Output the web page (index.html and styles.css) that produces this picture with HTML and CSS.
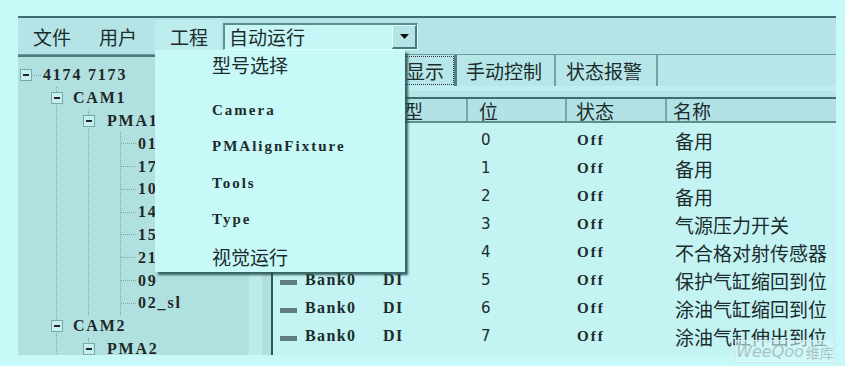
FILE: index.html
```html
<!DOCTYPE html>
<html lang="zh">
<head>
<meta charset="utf-8">
<link rel="stylesheet" href="styles.css">
</head>
<body>
<div class="window">
  <div class="menubar">
    <span class="mitem">文件</span>
    <span class="mitem">用户</span>
    <span class="mitem active">工程</span>
    <div class="combo">
      <span class="combo-text">自动运行</span>
      <span class="combo-btn"><svg width="9" height="5" viewBox="0 0 9 5"><path d="M0 0H9L4.5 5Z" fill="#111"/></svg></span>
    </div>
  </div>
  <div class="main">
    <div class="tree">
      <div class="row root"><span class="tgl"></span><span class="lbl">4174 7173</span></div>
      <div class="kids">
        <div class="row"><span class="tgl"></span><span class="lbl">CAM1</span></div>
        <div class="kids">
          <div class="row"><span class="tgl"></span><span class="lbl">PMA1</span></div>
          <div class="kids">
            <div class="row leaf"><span class="stub"></span><span class="lbl">01</span></div>
            <div class="row leaf"><span class="stub"></span><span class="lbl">17</span></div>
            <div class="row leaf"><span class="stub"></span><span class="lbl">10</span></div>
            <div class="row leaf"><span class="stub"></span><span class="lbl">14</span></div>
            <div class="row leaf"><span class="stub"></span><span class="lbl">15</span></div>
            <div class="row leaf"><span class="stub"></span><span class="lbl">21</span></div>
            <div class="row leaf"><span class="stub"></span><span class="lbl">09</span></div>
            <div class="row leaf"><span class="stub"></span><span class="lbl">02_sl</span></div>
          </div>
        </div>
        <div class="row"><span class="tgl"></span><span class="lbl">CAM2</span></div>
        <div class="kids">
          <div class="row"><span class="tgl"></span><span class="lbl">PMA2</span></div>
        </div>
      </div>
      <div class="splitter"></div>
    </div>
    <div class="pane">
      <div class="tabs">
        <span class="tab sel"><span class="focus">数据显示</span></span>
        <span class="tab">手动控制</span>
        <span class="tab">状态报警</span>
      </div>
      <div class="list">
        <div class="head">
          <span class="c1">地址</span>
          <span class="c2">类型</span>
          <span class="c3">位</span>
          <span class="c4">状态</span>
          <span class="c5">名称</span>
        </div>
        <div class="rows">
          <div class="lrow"><span class="c1"><i class="ico"></i>Bank0</span><span class="c2">DI</span><span class="c3">0</span><span class="c4">Off</span><span class="c5">备用</span></div>
          <div class="lrow"><span class="c1"><i class="ico"></i>Bank0</span><span class="c2">DI</span><span class="c3">1</span><span class="c4">Off</span><span class="c5">备用</span></div>
          <div class="lrow"><span class="c1"><i class="ico"></i>Bank0</span><span class="c2">DI</span><span class="c3">2</span><span class="c4">Off</span><span class="c5">备用</span></div>
          <div class="lrow"><span class="c1"><i class="ico"></i>Bank0</span><span class="c2">DI</span><span class="c3">3</span><span class="c4">Off</span><span class="c5">气源压力开关</span></div>
          <div class="lrow"><span class="c1"><i class="ico"></i>Bank0</span><span class="c2">DI</span><span class="c3">4</span><span class="c4">Off</span><span class="c5">不合格对射传感器</span></div>
          <div class="lrow"><span class="c1"><i class="ico"></i>Bank0</span><span class="c2">DI</span><span class="c3">5</span><span class="c4">Off</span><span class="c5">保护气缸缩回到位</span></div>
          <div class="lrow"><span class="c1"><i class="ico"></i>Bank0</span><span class="c2">DI</span><span class="c3">6</span><span class="c4">Off</span><span class="c5">涂油气缸缩回到位</span></div>
          <div class="lrow"><span class="c1"><i class="ico"></i>Bank0</span><span class="c2">DI</span><span class="c3">7</span><span class="c4">Off</span><span class="c5">涂油气缸伸出到位</span></div>
        </div>
      </div>
    </div>
  </div>
  <div class="popup">
    <div class="pitem first cjk">型号选择</div>
    <div class="pitem">Camera</div>
    <div class="pitem">PMAlignFixture</div>
    <div class="pitem">Tools</div>
    <div class="pitem">Type</div>
    <div class="pitem cjk">视觉运行</div>
  </div>
</div>
<div class="watermark"><span class="wq">WeeQoo</span><span class="wk">维库</span></div>
</body>
</html>
```

FILE: styles.css
```css
* { box-sizing: border-box; }
html, body { margin: 0; padding: 0; }
body {
  width: 845px;
  height: 366px;
  overflow: hidden;
  background: #c8f9f9;
  color: #1c2b2b;
  font-family: "Noto Sans CJK SC", "Noto Sans", sans-serif;
  position: relative;
}
.window {
  position: relative;
  margin: 16px 0 0 18px;
  width: 818px;
  height: 339px;
  background: #b4e4e6;
  border-top: 2px solid #3f6d6e;
  display: flex;
  flex-direction: column;
}
.menubar {
  height: 36px;
  display: flex;
  align-items: center;
  padding-left: 15px;
  font-size: 19px;
  line-height: 1;
}
.mitem { margin-right: 28px; }
.mitem:nth-child(2) { margin-right: 18px; }
.mitem.active {
  margin-right: 2px;
  padding: 0 13px 0 15px;
  height: 32px;
  display: flex;
  align-items: center;
  background: #bdecee;
}
.combo {
  width: 195px;
  height: 27px;
  display: flex;
  align-items: stretch;
  background: #c6f6f6;
  border-top: 2px solid #5e8e8f;
  border-left: 2px solid #5e8e8f;
  border-bottom: 1px solid #d8ffff;
  border-right: 1px solid #d8ffff;
}
.combo-text { flex: 1; padding-left: 4px; display: flex; align-items: center; }
.combo-btn {
  width: 25px;
  background: #b4e4e6;
  border-top: 1px solid #e0ffff;
  border-left: 1px solid #e0ffff;
  border-right: 2px solid #4c7a7b;
  border-bottom: 2px solid #4c7a7b;
  display: flex;
  align-items: center;
  justify-content: center;
}
.main {
  flex: 1;
  display: flex;
  border-top: 1px solid #6a9c9d;
  min-height: 0;
}
.tree {
  position: relative;
  width: 253px;
  background: #b1e0e1;
  border-top: 2px solid #4b7b7c;
  padding-top: 7px;
  overflow: hidden;
  font-family: "Liberation Serif", serif;
  font-size: 16px;
  font-weight: bold;
  letter-spacing: 1.8px;
}
.row {
  height: 22.8px;
  display: flex;
  align-items: center;
  padding-left: 2px;
  position: relative;
  z-index: 1;
}
.tgl {
  width: 12px;
  height: 12px;
  border: 1px solid #7fa6a7;
  background: #c4f0f1;
  position: relative;
  flex: none;
}
.tgl::after {
  content: "";
  position: absolute;
  left: 2px;
  top: 4px;
  width: 6px;
  height: 2px;
  background: #223;
}
.lbl { margin-left: 11px; color: #1f2828; }
.root .lbl { margin-left: 2px; }
.root .tgl { margin-right: 9px; }
.root .tgl::before {
  content: "";
  position: absolute;
  left: 11px;
  top: 5px;
  width: 9px;
  border-top: 1px dotted #7fa6a7;
}
.kids {
  margin-left: 38px;
  border-left: 1px dotted #7fa6a7;
}
.kids > .row { padding-left: 0; }
.kids > .row > .tgl { margin-left: -6px; }
.kids > .row > .lbl { margin-left: 10px; }
.kids .kids > .row > .lbl { margin-left: 12px; }
.leaf > .stub {
  width: 15px;
  border-top: 1px dotted #7fa6a7;
}
.kids .kids .kids > .leaf > .lbl { margin-left: 2px; }
.kids .kids { margin-left: 31px; }
.splitter {
  position: absolute;
  top: 0;
  bottom: 0;
  left: 231px;
  width: 13px;
  background: #bdeaeb;
}
.pane {
  flex: 1;
  display: flex;
  flex-direction: column;
  min-width: 0;
}
.tabs {
  height: 36px;
  display: flex;
  align-items: flex-end;
  padding-left: 87px;
  font-size: 19px;
  line-height: 1;
  background: #b6e6e8;
  border-bottom: 5px solid #bfeeef;
}
.tab {
  height: 31px;
  display: flex;
  align-items: center;
  border-right: 2px solid #7a9fa0;
  padding: 0 12px 0 9px;
}
.tab.sel { border-right: 3px solid #55807f; padding: 0 0 0 6px; }
.focus {
  border: 1px dotted #334;
  padding: 4px 9px 4px 3px;
}
.tab:nth-child(3) { padding: 0 14px 0 10px; }
.list {
  flex: 1;
  border-left: 2px solid #2f5a5b;
  background: #c3f3f3;
  margin-top: 6px;
  display: flex;
  flex-direction: column;
  min-height: 0;
  overflow: hidden;
}
.head {
  height: 26px;
  flex: none;
  display: grid;
  grid-template-columns: 102px 93px 99px 100px 1fr;
  background: #b2e2e4;
  border-top: 2px solid #3f6d6e;
  border-bottom: 2px solid #5f8c8d;
  font-size: 19px;
  line-height: 1;
}
.head > span {
  display: flex;
  align-items: center;
  border-right: 2px solid #7ea3a4;
}
.head > span:last-child { border-right: none; }
.head .c1 { padding-left: 14px; }
.head .c2 { padding-left: 10px; }
.head .c3 { padding-left: 11px; }
.head .c4 { padding-left: 9px; }
.head .c5 { padding-left: 6px; }
.rows { padding-top: 3px; }
.lrow {
  height: 28px;
  display: grid;
  grid-template-columns: 102px 93px 99px 100px 1fr;
  align-items: center;
}
.lrow .c1, .lrow .c2 {
  font-family: "Liberation Serif", serif;
  font-weight: bold;
  font-size: 16px;
  letter-spacing: 1.4px;
}
.lrow .c1 { display: flex; align-items: center; padding-left: 7px; }
.ico {
  width: 17px;
  height: 5px;
  background: #5d7d7e;
  margin-right: 8px;
  margin-top: 5px;
  flex: none;
}
.lrow .c2 { padding-left: 8px; }
.lrow .c3 {
  padding-left: 13px;
  font-family: "DejaVu Sans", sans-serif;
  font-size: 15px;
}
.lrow .c4 {
  padding-left: 10px;
  font-family: "Liberation Serif", serif;
  font-weight: bold;
  font-size: 15px;
  letter-spacing: 2px;
}
.lrow .c5 {
  padding-left: 8px;
  font-size: 19px;
  line-height: 1;
  white-space: nowrap;
}
.popup {
  position: absolute;
  left: 137px;
  top: 32px;
  width: 250px;
  height: 222px;
  background: #c8f9f9;
  box-shadow: 3px 3px 2px rgba(35, 75, 76, 0.85);
  padding-top: 2px;
  font-family: "Liberation Serif", serif;
  font-size: 15px;
  font-weight: bold;
  letter-spacing: 2px;
  z-index: 5;
}
.pitem {
  height: 36.5px;
  display: flex;
  align-items: center;
  padding-left: 57px;
}
.pitem.first { height: 24px; margin-bottom: 16px; }
.pitem.cjk {
  font-family: "Noto Sans CJK SC", sans-serif;
  font-weight: normal;
  font-size: 19px;
  letter-spacing: 0;
}
.watermark {
  position: absolute;
  left: 735px;
  top: 340px;
  width: 100px;
  height: 23px;
  border: 1px solid #d8e8e8;
  background: rgba(215, 250, 250, 0.6);
  display: flex;
  align-items: center;
  justify-content: center;
  gap: 2px;
  color: #a9c4c4;
}
.wq {
  font-family: "DejaVu Sans", sans-serif;
  font-style: italic;
  font-size: 16px;
}
.wk { font-size: 14px; }
```
